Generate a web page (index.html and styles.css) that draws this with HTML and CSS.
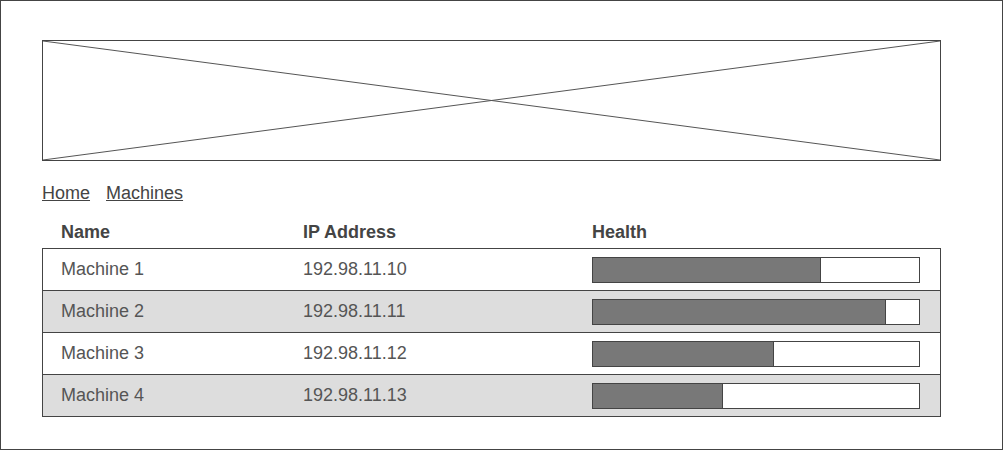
FILE: index.html
```html
<!DOCTYPE html>
<html lang="en">
  <head>
    <meta charset="UTF-8" />
    <meta name="viewport" content="width=device-width, initial-scale=1.0" />
    <title>Machines</title>
    <link rel="stylesheet" href="styles.css">
  </head>
  <body>
    <div class="frame">
      <div class="page">
        <div class="banner">
          <svg class="banner-x" viewBox="0 0 100 100" preserveAspectRatio="none">
            <line x1="0" y1="0" x2="100" y2="100" vector-effect="non-scaling-stroke" />
            <line x1="0" y1="100" x2="100" y2="0" vector-effect="non-scaling-stroke" />
          </svg>
        </div>

        <nav class="crumbs">
          <a href="#">Home</a>
          <a href="#">Machines</a>
        </nav>

        <div class="grid">
          <div class="row head">
            <div>Name</div>
            <div>IP Address</div>
            <div>Health</div>
          </div>
          <div class="body">
            <div class="row">
              <div>Machine 1</div>
              <div>192.98.11.10</div>
              <div class="bar"><span class="fill" style="width: 70%"></span></div>
            </div>
            <div class="row alt">
              <div>Machine 2</div>
              <div>192.98.11.11</div>
              <div class="bar"><span class="fill" style="width: 90%"></span></div>
            </div>
            <div class="row">
              <div>Machine 3</div>
              <div>192.98.11.12</div>
              <div class="bar"><span class="fill" style="width: 55.5%"></span></div>
            </div>
            <div class="row alt">
              <div>Machine 4</div>
              <div>192.98.11.13</div>
              <div class="bar"><span class="fill" style="width: 40%"></span></div>
            </div>
          </div>
        </div>
      </div>
    </div>
  </body>
</html>
```

FILE: styles.css
```css
* {
  box-sizing: border-box;
}
body {
  margin: 0;
  font-family: "Liberation Sans", Arial, sans-serif;
  font-size: 18px;
  color: #555;
  background-color: white;
}
.frame {
  width: 1003px;
  height: 450px;
  border: 1px solid #444;
  padding: 39px 0 0 41px;
}
.page {
  width: 899px;
}
.banner {
  height: 121px;
  border: 1px solid #444;
}
.banner-x {
  display: block;
  width: 100%;
  height: 100%;
}
.banner-x line {
  stroke: #555;
  stroke-width: 1;
}
.crumbs {
  display: flex;
  gap: 16px;
  margin-top: 22px;
  line-height: 21px;
}
.crumbs a {
  color: #444;
  text-decoration: underline;
}
.grid {
  margin-top: 12px;
}
.row {
  display: grid;
  grid-template-columns: 242px 289px 1fr;
  align-items: center;
  height: 42px;
  padding: 0 20px 0 18px;
  border-top: 1px solid #444;
}
.body .row:first-child {
  border-top: none;
  height: 41px;
}
.head {
  height: 32px;
  padding-left: 19px;
  border-top: none;
  font-weight: bold;
  color: #444;
}
.body {
  border: 1px solid #444;
}
.alt {
  background-color: #dddddd;
}
.bar {
  height: 26px;
  border: 1px solid #444;
  background-color: white;
}
.fill {
  display: block;
  height: 100%;
  background-color: #787878;
  border-right: 1px solid #444;
}
```
